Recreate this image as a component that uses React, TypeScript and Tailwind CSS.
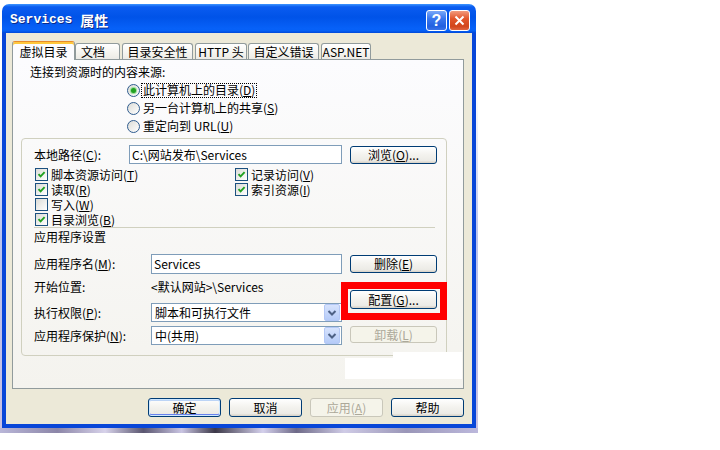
import React from "react";

const M = ({ c }: { c: string }) => (
  <>
    (<span className="underline">{c}</span>)
  </>
);

const Check = ({ on }: { on: boolean }) => (
  <span className="w-[13px] h-[13px] border border-[#1C5180] bg-[linear-gradient(135deg,#DCDCD7,#FFFFFF)] flex items-center justify-center shrink-0">
    {on && (
      <svg width="9" height="9" viewBox="0 0 9 9">
        <path d="M1.5 4.2 L3.6 6.4 L7.6 2.2" stroke="#21A121" strokeWidth="1.9" fill="none" />
      </svg>
    )}
  </span>
);

const Radio = ({ on }: { on: boolean }) => (
  <span className="w-[13px] h-[13px] rounded-full border border-[#2F5C8F] bg-[linear-gradient(135deg,#DCDCD7,#FFFFFF)] flex items-center justify-center shrink-0">
    {on && <span className="w-[5px] h-[5px] rounded-full bg-[#21A121] shadow-[0_0_1px_1px_#8FDA8F]" />}
  </span>
);

const Btn = ({
  children,
  className,
  disabled,
  def,
}: {
  children: React.ReactNode;
  className: string;
  disabled?: boolean;
  def?: boolean;
}) => (
  <div
    className={`flex items-center justify-center rounded-[3px] border shrink-0 ${
      disabled
        ? "border-[#C9C7BA] text-[#ACA899] bg-[#F5F4EA]"
        : "border-[#003C74] text-black bg-[linear-gradient(180deg,#FFFFFF_0%,#F4F3EF_45%,#ECEBE6_85%,#D6D0C5_100%)]"
    } ${def ? "shadow-[inset_0_0_0_1px_#CEE7FF,inset_0_-1px_0_1px_#6982EE,inset_0_1px_0_1px_#BCD4F6]" : ""} ${className}`}
  >
    {children}
  </div>
);

const Arrow = () => (
  <div className="w-[16px] h-[17px] mr-[1px] rounded-[2px] border border-[#B4C8F6] bg-[linear-gradient(180deg,#D7E3FD,#B5CBF8)] flex items-center justify-center">
    <svg width="10" height="8" viewBox="0 0 10 8">
      <path d="M1.5 2 L5 5.5 L8.5 2" stroke="#4D6185" strokeWidth="2" fill="none" />
    </svg>
  </div>
);

const Select = ({ text }: { text: string }) => (
  <div className="w-[191px] h-[19px] border border-[#7F9DB9] bg-white flex items-center justify-between pl-[3px]">
    <span>{text}</span>
    <Arrow />
  </div>
);

const Tab = ({ label, className }: { label: React.ReactNode; className: string }) => (
  <div
    className={`h-[16px] border border-b-0 border-[#919B9C] rounded-t-[3px] bg-[linear-gradient(180deg,#FFFFFF,#F3F2EC_70%,#ECEBE6)] flex items-center ${className}`}
  >
    {label}
  </div>
);

export default function App() {
  return (
    <div className="w-[720px] h-[450px] bg-white relative font-['Noto_Sans_CJK_SC',sans-serif] text-[12px] leading-[14px] text-black">
      <div className="w-[478px] bg-[linear-gradient(180deg,#FFFFFF_0%,#FFFFFF_20%,#B9C3EE_55%,#C8C0E2_100%)]">
        <div className="pt-[4px] pl-[2px] pr-[2px]">
          <div className="w-[474px] rounded-t-[7px] overflow-hidden">
            {/* Title bar */}
            <div className="h-[29px] flex items-start justify-between pl-[8px] pr-[6px] bg-[linear-gradient(180deg,#3D95FF_0%,#0A5CF0_10%,#0053E8_45%,#0761F8_85%,#0560F5_92%,#0048D8_100%)]">
              <div className="h-[29px] flex items-center pt-[2px] text-white font-bold [text-shadow:1px_1px_0_#0A2A8A]">
                <span className="font-['Liberation_Mono',monospace] text-[13px]">Services&nbsp;</span>
                <span className="text-[14px]">属性</span>
              </div>
              <div className="flex gap-[2px] pt-[6px]">
                <div className="w-[21px] h-[21px] rounded-[3px] border border-white bg-[linear-gradient(180deg,#7AA8F8,#3A77EE_40%,#2260E0_80%,#3A72E8)] flex items-center justify-center text-white font-bold text-[16px] font-['Liberation_Sans',sans-serif]">
                  ?
                </div>
                <div className="w-[21px] h-[21px] rounded-[3px] border border-white bg-[linear-gradient(180deg,#F29B7E,#E2572C_40%,#D2451C_80%,#DE6440)] flex items-center justify-center">
                  <svg width="11" height="11" viewBox="0 0 11 11">
                    <path d="M1.5 1.5 L9.5 9.5 M9.5 1.5 L1.5 9.5" stroke="white" strokeWidth="2" />
                  </svg>
                </div>
              </div>
            </div>

            {/* Body */}
            <div className="bg-[#ECE9D8] border-x-4 border-b-4 border-[#0846D8] pt-[8px] pl-[6px] pr-[8px] pb-[7px]">
              {/* Tabs */}
              <div className="h-[18px] flex items-end">
                <div className="relative z-10 w-[63px] h-[19px] mb-[-1px] border border-b-0 border-[#919B9C] border-t-[#E68B2C] rounded-t-[3px] bg-[#FCFCFE] shadow-[inset_0_2px_0_#FFC83C] flex items-center justify-center pt-[1px]">
                  虚拟目录
                </div>
                <Tab label="文档" className="w-[45px] pl-[5px]" />
                <Tab label="目录安全性" className="w-[71px] ml-[2px] justify-center" />
                <Tab label="HTTP 头" className="w-[52px] ml-[2px] justify-center" />
                <Tab label="自定义错误" className="w-[71px] ml-[1px] justify-center" />
                <Tab label="ASP.NET" className="w-[50px] ml-[2px] justify-center" />
              </div>

              {/* Panel */}
              <div className="h-[330px] border border-[#919B9C] bg-[linear-gradient(180deg,#FCFCFE,#F4F3EE)] flex flex-col items-start">
                <div className="ml-[17px] mt-[5px] h-[14px]">连接到资源时的内容来源:</div>
                <div className="ml-[114px] mt-[2px] flex flex-col">
                  <div className="h-[18px] flex items-center gap-[1px]">
                    <Radio on />
                    <span className="border border-dotted border-black px-[1px] h-[15px] flex items-center">
                      此计算机上的目录<M c="D" />
                    </span>
                  </div>
                  <div className="h-[18px] flex items-center gap-[2px]">
                    <Radio on={false} />
                    <span className="pl-[1px]">
                      另一台计算机上的共享<M c="S" />
                    </span>
                  </div>
                  <div className="h-[18px] flex items-center gap-[2px]">
                    <Radio on={false} />
                    <span className="pl-[1px]">
                      重定向到 URL<M c="U" />
                    </span>
                  </div>
                </div>

                {/* Group box */}
                <div className="ml-[8px] mt-[3px] w-[426px] h-[218px] border border-[#D0D0BF] rounded-[4px] flex flex-col items-start">
                  <div className="ml-[12px] mt-[6px] h-[19px] flex items-start">
                    <div className="w-[95px] h-[19px] flex items-center">
                      本地路径<M c="C" />:
                    </div>
                    <div className="w-[213px] h-[19px] border border-[#7F9DB9] bg-white flex items-center pl-[2px]">
                      C:\网站发布\Services
                    </div>
                    <Btn className="ml-[8px] mt-[1px] w-[87px] h-[18px]">
                      浏览<M c="O" />...
                    </Btn>
                  </div>

                  <div className="ml-[13px] mt-[3px] grid grid-cols-[200px_200px]">
                    <div className="h-[15px] flex items-center gap-[3px]">
                      <Check on />
                      <span>
                        脚本资源访问<M c="T" />
                      </span>
                    </div>
                    <div className="h-[15px] flex items-center gap-[3px]">
                      <Check on />
                      <span>
                        记录访问<M c="V" />
                      </span>
                    </div>
                    <div className="h-[15px] flex items-center gap-[3px]">
                      <Check on />
                      <span>
                        读取<M c="R" />
                      </span>
                    </div>
                    <div className="h-[15px] flex items-center gap-[3px]">
                      <Check on />
                      <span>
                        索引资源<M c="I" />
                      </span>
                    </div>
                    <div className="h-[15px] flex items-center gap-[3px]">
                      <Check on={false} />
                      <span>
                        写入<M c="W" />
                      </span>
                    </div>
                    <div className="h-[15px]" />
                    <div className="h-[15px] flex items-center gap-[3px]">
                      <Check on />
                      <span>
                        目录浏览<M c="B" />
                      </span>
                    </div>
                    <div className="h-[15px]" />
                  </div>

                  <div className="ml-[12px] w-[401px] h-[1px] bg-[#D0D0BF]" />
                  <div className="ml-[12px] mt-[2px] h-[14px]">应用程序设置</div>

                  <div className="ml-[12px] mt-[10px] flex items-start">
                    <div className="flex flex-col">
                      <div className="h-[20px] flex items-center">
                        <div className="w-[117px]">
                          应用程序名<M c="M" />:
                        </div>
                        <div className="w-[191px] h-[20px] border border-[#7F9DB9] bg-white flex items-center pl-[2px]">
                          Services
                        </div>
                      </div>
                      <div className="mt-[3px] h-[20px] flex items-center">
                        <div className="w-[117px]">开始位置:</div>
                        <div>&lt;默认网站&gt;\Services</div>
                      </div>
                      <div className="mt-[6px] h-[19px] flex items-center">
                        <div className="w-[117px]">
                          执行权限<M c="P" />:
                        </div>
                        <Select text="脚本和可执行文件" />
                      </div>
                      <div className="mt-[4px] h-[19px] flex items-center">
                        <div className="w-[117px]">
                          应用程序保护<M c="N" />:
                        </div>
                        <Select text="中(共用)" />
                      </div>
                    </div>
                    <div className="ml-[8px] flex flex-col">
                      <Btn className="mt-[1px] w-[87px] h-[18px]">
                        删除<M c="E" />
                      </Btn>
                      <div className="relative mt-[17px]">
                        <Btn className="w-[87px] h-[19px]">
                          配置<M c="G" />...
                        </Btn>
                        <div className="absolute left-[-9px] top-[-8px] right-[-10px] bottom-[-11px] border-[7px] border-[#FF0000]" />
                      </div>
                      <Btn disabled className="mt-[17px] w-[87px] h-[17px]">
                        卸载<M c="L" />
                      </Btn>
                    </div>
                  </div>
                </div>
              </div>

              {/* Bottom buttons */}
              <div className="mt-[9px] h-[19px] flex justify-end gap-[8px]">
                <Btn def className="w-[73px] h-[19px]">
                  确定
                </Btn>
                <Btn className="w-[73px] h-[19px]">取消</Btn>
                <Btn disabled className="w-[73px] h-[19px]">
                  应用<M c="A" />
                </Btn>
                <Btn className="w-[73px] h-[19px]">帮助</Btn>
              </div>
            </div>
          </div>
        </div>
        <div className="h-[5px] w-[478px] bg-[linear-gradient(90deg,#B9B6D8_0%,#8C86A8_12%,#D7D2EA_22%,#5A5670_30%,#C9C4E2_38%,#3C3848_45%,#D4D0EC_55%,#6E6A88_62%,#CFCBE6_72%,#9A96B8_85%,#BCB8DC_100%)]" />
      </div>

      {/* white patch artifact */}
      <div className="absolute left-[345px] top-[358px] w-[50px] h-[21px] bg-white" />
      <div className="absolute left-[393px] top-[352px] w-[69px] h-[27px] bg-white" />
    </div>
  );
}
